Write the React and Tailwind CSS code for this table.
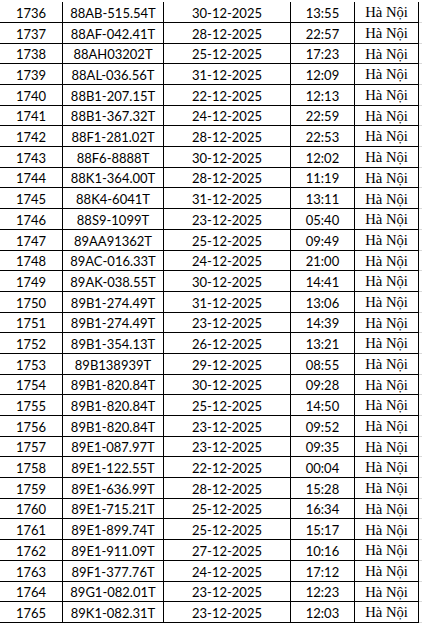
const rows = [
  ["1736", "88AB-515.54T", "30-12-2025", "13:55"],
  ["1737", "88AF-042.41T", "28-12-2025", "22:57"],
  ["1738", "88AH03202T", "25-12-2025", "17:23"],
  ["1739", "88AL-036.56T", "31-12-2025", "12:09"],
  ["1740", "88B1-207.15T", "22-12-2025", "12:13"],
  ["1741", "88B1-367.32T", "24-12-2025", "22:59"],
  ["1742", "88F1-281.02T", "28-12-2025", "22:53"],
  ["1743", "88F6-8888T", "30-12-2025", "12:02"],
  ["1744", "88K1-364.00T", "28-12-2025", "11:19"],
  ["1745", "88K4-6041T", "31-12-2025", "13:11"],
  ["1746", "88S9-1099T", "23-12-2025", "05:40"],
  ["1747", "89AA91362T", "25-12-2025", "09:49"],
  ["1748", "89AC-016.33T", "24-12-2025", "21:00"],
  ["1749", "89AK-038.55T", "30-12-2025", "14:41"],
  ["1750", "89B1-274.49T", "31-12-2025", "13:06"],
  ["1751", "89B1-274.49T", "23-12-2025", "14:39"],
  ["1752", "89B1-354.13T", "26-12-2025", "13:21"],
  ["1753", "89B138939T", "29-12-2025", "08:55"],
  ["1754", "89B1-820.84T", "30-12-2025", "09:28"],
  ["1755", "89B1-820.84T", "25-12-2025", "14:50"],
  ["1756", "89B1-820.84T", "23-12-2025", "09:52"],
  ["1757", "89E1-087.97T", "23-12-2025", "09:35"],
  ["1758", "89E1-122.55T", "22-12-2025", "00:04"],
  ["1759", "89E1-636.99T", "28-12-2025", "15:28"],
  ["1760", "89E1-715.21T", "25-12-2025", "16:34"],
  ["1761", "89E1-899.74T", "25-12-2025", "15:17"],
  ["1762", "89E1-911.09T", "27-12-2025", "10:16"],
  ["1763", "89F1-377.76T", "24-12-2025", "17:12"],
  ["1764", "89G1-082.01T", "23-12-2025", "12:23"],
  ["1765", "89K1-082.31T", "23-12-2025", "12:03"],
];

const sans = "font-['Lato','Liberation_Sans',sans-serif] text-[13px]";
const serif = "font-['Liberation_Serif',serif] text-[14.67px]";

export default function App() {
  return (
    <div className="w-[422px] h-[633px] bg-white text-black overflow-hidden pt-[2.3px]">
      {rows.map((r) => (
        <div key={r[0]} className="flex h-[20.7px]">
          <div className="flex w-[419px] h-full border-b border-black">
            <div className={`w-[63px] border-r border-black flex items-end justify-center pb-[2px] leading-none ${sans}`}>{r[0]}</div>
            <div className={`w-[101px] border-r border-black flex items-end justify-center pb-[2px] leading-none ${sans}`}>{r[1]}</div>
            <div className={`w-[127px] border-r border-black flex items-end justify-center pb-[2px] leading-none ${sans}`}>{r[2]}</div>
            <div className={`w-[64px] border-r border-black flex items-end justify-center pb-[2px] leading-none ${sans}`}>{r[3]}</div>
            <div className={`w-[64px] border-r border-black flex items-end justify-center pb-[2px] leading-none ${serif}`}>Hà Nội</div>
          </div>
          <div className="flex-1 h-full border-b border-[#d9d9d9]"></div>
        </div>
      ))}
    </div>
  );
}
